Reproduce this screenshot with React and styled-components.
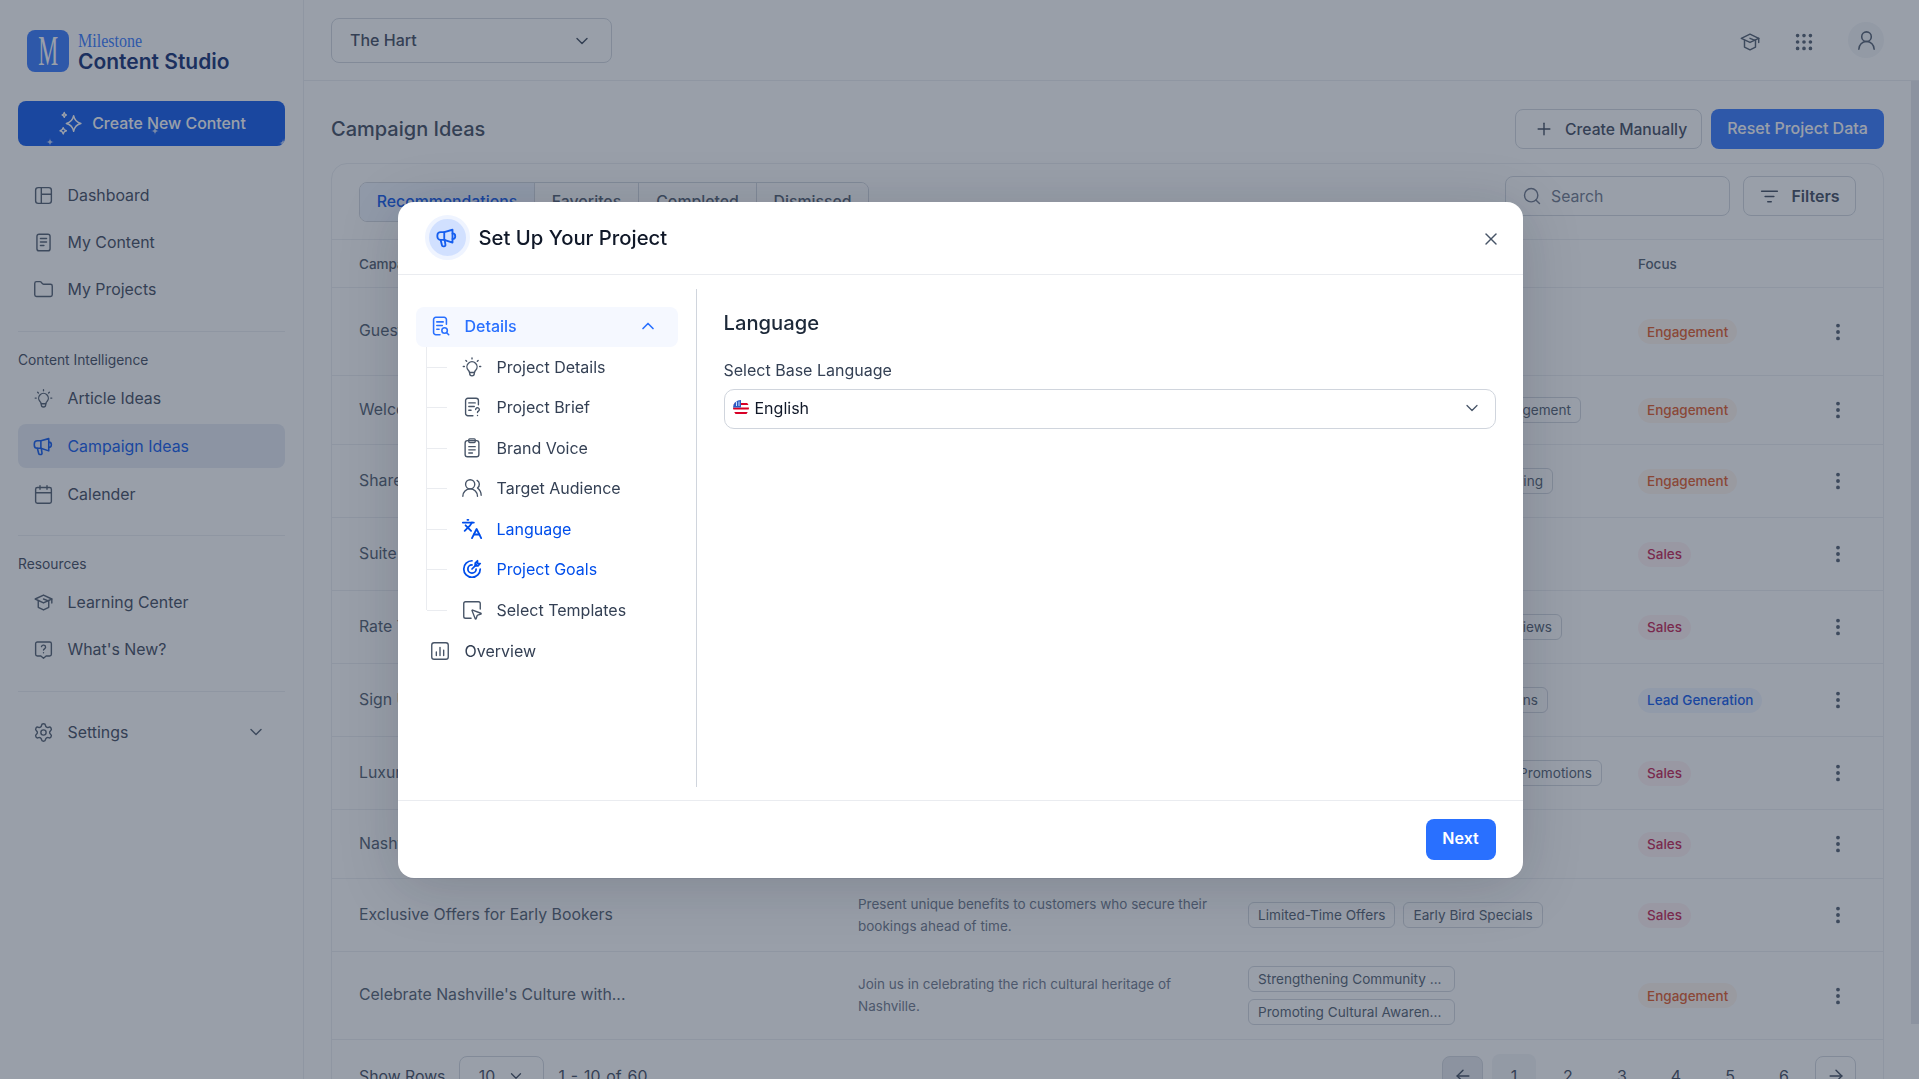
import React from "react";
import styled, { createGlobalStyle } from "styled-components";
import { ChevronDown, ChevronUp, X, Plus, Search, EllipsisVertical, Grip, UserRound, Languages, UsersRound, SquareMousePointer, Settings, Folder, Calendar, ArrowLeft, ArrowRight } from "lucide-react";

const Global = createGlobalStyle`
  html, body { margin: 0; padding: 0; height: 100%; overflow: hidden; background: #fff; }
  body { font-family: Inter, "Noto Sans", sans-serif; color: #344054; }
  #root { height: 100%; }
  * { box-sizing: border-box; }
`;

const Page = styled.div`display: flex; height: 1079px; width: 100%; position: relative; overflow: hidden;`;

const Sidebar = styled.aside`
  width: 304px; flex: none; height: 100%; border-right: 1px solid #EAECF0; padding: 30px 18px 0; display: flex; flex-direction: column;
`;
const Brand = styled.div`display: flex; gap: 9px; height: 41px; padding-left: 9px; align-items: center;`;
const LogoMark = styled.div`
  width: 42px; height: 42px; border-radius: 8px; background: #2970FF; color: #fff; display: flex; align-items: center; justify-content: center;
  font-family: "Liberation Serif", serif; font-size: 43px; line-height: 42px; overflow: hidden;
  span { display: block; transform: scaleX(.52); }
`;
const BrandText = styled.div`display: flex; flex-direction: column; line-height: 1; padding-top: 5px;`;
const Milestone = styled.span`
  font-family: "Liberation Serif", serif; font-size: 18px; color: #2970FF; transform: scaleX(.89); transform-origin: left; line-height: 17px; height: 17px; white-space: nowrap;
`;
const Studio = styled.span`font-size: 21px; font-weight: 600; color: #03206b; line-height: 24px; white-space: nowrap;`;
const CreateBtn = styled.button`
  margin-top: 30px; height: 45px; width: 267px; border: 0; border-radius: 8px; background: #004EEB; color: #fff; font: 500 15.9px Inter, sans-serif;
  display: flex; align-items: center; justify-content: center; gap: 9px; position: relative; overflow: hidden; padding: 0 0 1px 1px;
`;
const Speck = styled.svg`position: absolute; left: ${p => p.$x}px; top: ${p => p.$y}px; width: 8px; height: 8px; fill: #fff; opacity: .75;`;
const NavGroup = styled.nav`display: flex; flex-direction: column; gap: ${p => p.$gap || 3}px; margin-top: ${p => p.$mt || 0}px;`;
const NavItem = styled.a`
  height: 44px; border-radius: 8px; display: flex; align-items: center; gap: 13.5px; padding: 0 15px; font-size: 15.9px; font-weight: 400;
  color: ${p => p.$active ? "#004EEB" : "#344054"}; background: ${p => p.$active ? "#E4E9F2" : "transparent"};
  > svg { flex: none; width: 21px; height: 21px; color: ${p => p.$active ? "#004EEB" : "#475467"}; }
`;
const NavEnd = styled.span`margin-left: auto; display: flex; margin-right: 4px; color: #475467;`;
const Rule = styled.hr`border: 0; height: 1px; background: #EAECF0; margin: ${p => p.$mt || 20}px 0 0; width: 267px;`;
const SectionLabel = styled.div`font-size: 13.8px; color: #344054; line-height: 18px; margin-top: 19px;`;

const Main = styled.div`flex: 1; min-width: 0; display: flex; flex-direction: column; height: 100%;`;
const Topbar = styled.header`
  height: 81px; flex: none; border-bottom: 1px solid #EAECF0; padding: 18px 35px 0 27px; display: flex; justify-content: space-between;
`;
const ProjectSelect = styled.div`
  width: 281px; height: 45px; border: 1px solid #D0D5DD; border-radius: 8px; display: flex; align-items: center; justify-content: space-between; padding: 0 19px 2px 18px;
  font-size: 16px; font-weight: 500; color: #344054;
  svg { margin-top: 2px; }
`;
const TopIcons = styled.div`
  display: flex; align-items: center; gap: 27px; height: 44px; color: #475467;
  > svg { margin-top: 4px; }
  > svg:first-child { margin-right: 5px; width: 22px; height: 22px; }
`;
const Avatar = styled.div`width: 36px; height: 36px; border-radius: 50%; background: #F2F4F7; display: flex; align-items: center; justify-content: center; margin-left: 6px;`;
const Below = styled.div`flex: 1; min-height: 0; display: flex;`;
const Scroll = styled.div`flex: 1; min-width: 0; overflow: hidden; padding: 28px 27px 25px;`;
const Rail = styled.div`width: 8px; flex: none;`;
const Thumb = styled.div`height: 943px; background: #E4E7EC;`;
const TitleRow = styled.div`display: flex; align-items: center; justify-content: space-between; height: 40px;`;
const PageTitle = styled.h1`margin: 0; font-size: 20px; font-weight: 500; color: #344054;`;
const Actions = styled.div`display: flex; gap: 9px;`;
const GhostBtn = styled.button`
  height: 40px; border: 1px solid #D0D5DD; border-radius: 8px; background: #fff; color: #344054; font: 500 15.7px Inter, sans-serif; padding: 0 12px 0 18px;
  display: flex; align-items: center; gap: 11px; width: ${p => p.$w}px; white-space: nowrap;
`;
const PrimaryBtn = styled.button`
  height: 40px; border: 0; border-radius: 8px; background: #2970FF; color: #fff; font: 500 16px Inter, sans-serif; width: 173px; white-space: nowrap; padding: 0 0 2px;
`;
const Card = styled.section`border: 1px solid #EAECF0; border-radius: 16px; margin-top: 14px;`;
const Toolbar = styled.div`height: 76px; display: flex; align-items: center; justify-content: space-between; padding: 0 27px; border-bottom: 1px solid #EAECF0;`;
const Tabs = styled.div`display: flex; height: 40px; border: 1px solid #D0D5DD; border-radius: 8px; overflow: hidden;`;
const Tab = styled.div`
  width: ${p => p.$w}px; display: flex; align-items: center; justify-content: center; font-size: 15.8px; font-weight: 500;
  color: ${p => p.$active ? "#004EEB" : "#475467"}; background: ${p => p.$active ? "#EFF4FF" : "#fff"};
  & + & { border-left: 1px solid #D0D5DD; }
`;
const ToolRight = styled.div`display: flex; gap: 13px; margin-top: -11px;`;
const SearchBox = styled.div`
  width: 225px; height: 40px; border: 1px solid #D0D5DD; border-radius: 8px; display: flex; align-items: center; gap: 9px; padding: 0 16px; color: #667085; font-size: 15.8px;
`;
const FilterBtn = styled.div`
  width: 113px; height: 40px; border: 1px solid #D0D5DD; border-radius: 8px; display: flex; align-items: center; justify-content: center; gap: 11px; color: #344054; font-size: 16px; font-weight: 600;
`;
const Row = styled.div`
  display: grid; grid-template-columns: 499px 390px 390px 1fr 40px; align-items: center; padding: 0 25px 0 27px; min-height: ${p => p.$h}px; border-bottom: 1px solid #EAECF0;
`;
const HeadCell = styled.div`font-size: 13.5px; font-weight: 500; color: #475467;`;
const NameCell = styled.div`font-size: 15.85px; color: #475467; white-space: nowrap; margin-bottom: 2px;`;
const DescCell = styled.div`font-size: 13.5px; line-height: 22px; color: #667085; max-width: 372px; margin-bottom: 1px;`;
const TagCell = styled.div`display: flex; flex-wrap: wrap; gap: 7px 8px;`;
const Tag = styled.span`
  height: 26px; border: 1px solid #D0D5DD; border-radius: 6px; display: inline-flex; align-items: center; padding: 0 9px; font-size: 13.6px; color: #475467; white-space: nowrap;
  width: ${p => p.$w ? p.$w + "px" : "auto"}; justify-content: ${p => p.$end ? "flex-end" : "flex-start"};
`;
const pill = { Engagement: ["#FFF4ED", "#E04F16"], Sales: ["#FFF1F3", "#C01048"], "Lead Generation": ["#EFF4FF", "#004EEB"] };
const Focus = styled.span`
  display: inline-flex; height: 25px; align-items: center; padding: 0 9px; border-radius: 13px; font-size: 13.5px; font-weight: 500;
  background: ${p => pill[p.$k][0]}; color: ${p => pill[p.$k][1]};
`;
const Kebab = styled.div`display: flex; justify-content: center; color: #475467;`;
const Foot = styled.div`height: 74px; padding: 14px 27px 0; display: flex; justify-content: space-between; align-items: flex-start;`;
const FootLeft = styled.div`display: flex; align-items: center; gap: 14px; font-size: 15.8px; color: #344054; margin-top: 2px;`;
const RowsSelect = styled.div`width: 85px; height: 40px; border: 1px solid #D0D5DD; border-radius: 8px; display: flex; align-items: center; justify-content: center; gap: 12px;`;
const RangeText = styled.span`word-spacing: 1.5px;`;
const Pager = styled.div`display: flex; align-items: center; padding-left: 2px;`;
const ArrowBtn = styled.div`
  width: 41px; height: 40px; border: 1px solid #D0D5DD; border-radius: 8px; background: ${p => p.$off ? "#E4E7EC" : "#fff"}; display: flex; align-items: center; justify-content: center; color: #344054;
`;
const PageNum = styled.div`
  width: 44px; height: 44px; margin: 0 ${p => p.$last ? 9 : 5}px 0 ${p => p.$first ? 9 : 5}px; border-radius: 8px; background: ${p => p.$on ? "#F2F4F7" : "transparent"}; display: flex; align-items: center; justify-content: center; font-size: 16px; color: #344054;
`;

const Overlay = styled.div`
  position: fixed; inset: 0; padding-left: 1px; background: rgba(52, 64, 84, .5); display: flex; align-items: center; justify-content: center; z-index: 10;
`;
const Modal = styled.div`
  width: 1125px; height: 676px; background: #fff; border-radius: 16px; display: flex; flex-direction: column; box-shadow: 0 8px 60px rgba(16, 24, 40, .18);
`;
const ModalHead = styled.div`height: 73px; flex: none; border-bottom: 1px solid #EAECF0; display: flex; align-items: center; padding: 0 22px 0 27px; gap: 9px;`;
const Ring = styled.div`
  width: 45px; height: 45px; border-radius: 50%; background: #D1E0FF; border: 4px solid #EFF4FF; display: flex; align-items: center; justify-content: center; color: #155EEF;
`;
const ModalTitle = styled.h2`margin: 0; flex: 1; font-size: 20.3px; font-weight: 500; color: #101828;`;
const CloseBtn = styled.div`display: flex; color: #475467; margin-top: 2px;`;
const ModalBody = styled.div`flex: 1; min-height: 0; display: flex; padding: 14px 0 13px;`;
const Steps = styled.div`
  width: 299px; flex: none; border-right: 1px solid #D0D5DD; padding: 18px 18px 0; display: flex; flex-direction: column;
`;
const StepHead = styled.div`
  height: 40px; border-radius: 8px; display: flex; align-items: center; gap: 14px; padding: 0 13px 1px; font-size: 16px; font-weight: ${p => p.$open ? 500 : 400};
  background: ${p => p.$open ? "#F5F8FF" : "transparent"}; color: ${p => p.$open ? "#2970FF" : "#344054"};
  > svg { flex: none; color: ${p => p.$open ? "#2970FF" : "#475467"}; }
`;
const StepChev = styled.span`margin-left: auto; display: flex; margin-right: 7px;`;
const Tree = styled.div`margin-left: 10px; border-left: 1px solid #EAECF0; display: flex; flex-direction: column; height: 263px; margin-bottom: 22px;`;
const TreeItem = styled.div`
  height: 40.5px; flex: none; display: flex; align-items: center; padding-left: 34px; gap: 14px; font-size: 16px; position: relative;
  color: ${p => p.$on ? "#004EEB" : "#344054"};
  svg { flex: none; color: ${p => p.$on ? "#004EEB" : "#475467"}; }
  &::before { content: ""; position: absolute; left: 0; top: 50%; width: 20px; height: 1px; background: #EAECF0; }
`;
const Pane = styled.div`flex: 1; padding: 22px 27px 0; display: flex; flex-direction: column;`;
const PaneTitle = styled.h3`margin: 0; font-size: 20.2px; font-weight: 500; line-height: 24px; color: #1D2939;`;
const FieldLabel = styled.label`font-size: 16px; color: #344054; line-height: 20px; margin-top: 25px;`;
const LangSelect = styled.div`
  height: 40px; margin-top: 9px; border: 1px solid #D0D5DD; border-radius: 10px; display: flex; align-items: center; padding: 0 13px 1px 8px; gap: 6px; font-size: 16px; color: #101828;
  svg:last-child { margin-left: auto; color: #475467; }
`;
const ModalFoot = styled.div`height: 78px; flex: none; border-top: 1px solid #EAECF0; display: flex; justify-content: flex-end; align-items: flex-start; padding: 18px 27px 0;`;
const NextBtn = styled.button`width: 70px; height: 41px; border: 0; border-radius: 8px; background: #2970FF; color: #fff; font: 600 16px Inter, sans-serif; padding: 0 0 2px;`;

const Ic = ({ s = 20, w = 1.6, children }) => (
  <svg width={s} height={s} viewBox="0 0 24 24" fill="none" stroke="currentColor" strokeWidth={w} strokeLinecap="round" strokeLinejoin="round">{children}</svg>
);
const star = (cx, cy, r) => `M${cx} ${cy - r}Q${cx} ${cy} ${cx + r} ${cy}Q${cx} ${cy} ${cx} ${cy + r}Q${cx} ${cy} ${cx - r} ${cy}Q${cx} ${cy} ${cx} ${cy - r}Z`;
const Sparkle = () => <Ic s={25} w={1.4}><path d="M15 4.5c.8 4 2.4 6.4 7 7.5-4.6 1.1-6.2 3.5-7 7.5-.8-4-2.4-6.4-7-7.5 4.6-1.1 6.2-3.5 7-7.5z" /><path d="M6 1.5c.3 1.4.8 2 2 2.3-1.2.3-1.7.9-2 2.3-.3-1.4-.8-2-2-2.3 1.2-.3 1.7-.9 2-2.3z" /><path d="M5 16c.4 1.8 1 2.6 3 3-2 .4-2.6 1.2-3 3-.4-1.8-1-2.6-3-3 2-.4 2.6-1.2 3-3z" /></Ic>;
const Dash = () => <Ic><rect x="3" y="3" width="18" height="18" rx="3" /><path d="M9.5 3v18M9.5 10.5H21" /></Ic>;
const Doc = () => <Ic><rect x="4.5" y="2.5" width="15" height="19" rx="2.5" /><path d="M8.5 7.5h7M8.5 11.5h7M8.5 15.5h4" /></Ic>;
const Bulb = ({ s = 22 }) => <Ic s={s} w={1.5}><path d="M8 15.5a5.5 5.5 0 1 1 8 0c-.8.8-1.2 1.5-1.2 2.5H9.2c0-1-.4-1.7-1.2-2.5z" /><path d="M9.5 18v1.2a2.5 2.5 0 0 0 5 0V18" /><path d="M12 2v1.2M2.5 11.5h1.2M20.3 11.5h1.2M5.3 4.8l.9.9M18.7 4.8l-.9.9" /></Ic>;
const Mega = ({ s = 22, w = 1.8 }) => <Ic s={s} w={w}><path d="M18 3 9 5.500H5A3.500 3.500 0 0 0 1.500 9v1.500A3.500 3.500 0 0 0 5 14h4l9 3z" /><path d="M9 5.500V14" /><path d="m5 14 1.500 6a1.500 1.500 0 0 0 1.500 1.200h.8a1.500 1.500 0 0 0 1.500-1.700L9.500 14.200" /><path d="M18 7a3 3 0 0 1 0 6" /></Ic>;
const Cap = ({ s = 21 }) => <Ic s={s} w={1.6}><path d="M2.5 8 12 3.5 21.5 8 12 12.5z" /><path d="M6 10v7.5l6 3 6-3V10" /><path d="M21.5 8v4.5" /><path d="m12 8 5.5 2.2" /></Ic>;
const Ask = () => <Ic><path d="M5 3.5h14a2 2 0 0 1 2 2v12a2 2 0 0 1-2 2h-4l-3 2.5L9 19.500H5a2 2 0 0 1-2-2v-12a2 2 0 0 1 2-2z" /><path d="M9.7 8.700a2.400 2.400 0 0 1 4.700.7c0 1.600-2.400 2-2.400 3.300M12 15.700h.01" /></Ic>;
const DocSearch = () => <Ic s={22} w={1.7}><path d="M19 10V5a2.500 2.500 0 0 0-2.500-2.500h-9A2.500 2.500 0 0 0 5 5v14a2.500 2.500 0 0 0 2.500 2.500H12" /><path d="M8.500 7.500h7M8.500 11.500h6M8.500 15.500h2.500" /><circle cx="17" cy="17" r="3" /><path d="m19.300 19.300 2.200 2.200" /></Ic>;
const DocAsk = () => <Ic s={22} w={1.5}><path d="M19 9.500V5a2.500 2.500 0 0 0-2.500-2.500h-9A2.500 2.500 0 0 0 5 5v14a2.500 2.500 0 0 0 2.500 2.500H13" /><path d="M8.500 7.500h7M8.500 11.500h6M8.500 15.500h2.500" /><path d="M16 14.700a2 2 0 1 1 3 1.800c-.7.400-1 .8-1 1.500M18 21.300h.01" /></Ic>;
const Clip = () => <Ic s={22} w={1.5}><rect x="4.500" y="4" width="15" height="17.500" rx="2.500" /><rect x="8.500" y="2" width="7" height="4" rx="1" /><path d="M8.500 10.500h7M8.500 14h7M8.500 17.500h4" /></Ic>;
const Goal = () => <Ic s={22} w={1.9}><path d="M12 3a9 9 0 1 0 9 9" /><path d="M12 7.500a4.500 4.500 0 1 0 4.500 4.500" /><path d="m12 12 5-5" /><path d="M15.500 5.500 18 3v3h3l-2.500 2.500h-3z" /></Ic>;
const Chart = () => <Ic s={22} w={1.5}><rect x="3" y="3" width="18" height="18" rx="2.500" /><path d="M8 17v-4M12 17V8M16 17v-6" /></Ic>;
const Filter = () => <Ic s={21} w={1.7}><path d="M3 6h18M7 12h10M10 18h4" /></Ic>;
const Flag = () => (
  <svg width="16" height="16" viewBox="0 0 16 16">
    <defs><clipPath id="fc"><circle cx="8" cy="8" r="8" /></clipPath></defs>
    <g clipPath="url(#fc)">
      <rect width="16" height="16" fill="#fff" />
      <path d="M0 3h16v2H0zM0 7.500h16v2H0zM0 12h16v2H0z" fill="#D80027" />
      <path d="M0 0h8v7.500H0z" fill="#2A5CC4" />
      <path d="M3 1.500h1V6H3zM5.500 1.500h1V6h-1z" fill="#cfe0ff" />
    </g>
  </svg>
);

const rows = [
  { h: 88, n: "Guest Loyalty Rewards Program", d: "Reward returning guests with special perks and stay credits.", t: [], f: "Engagement" },
  { h: 69, n: "Welcome Back Returning Guests", d: "Personal touches for guests who come back to stay again.", t: [["Loyalty Perks", 120], ["Guest Engagement", 205, 1]], f: "Engagement" },
  { h: 73, n: "Share Your Stay Stories", d: "Invite guests to share their favorite moments online.", t: [["Social Media Sharing", 305, 1]], f: "Engagement" },
  { h: 73, n: "Suite Upgrades for Members", d: "Offer complimentary suite upgrades to loyal members.", t: [["Room Upgrades", 0]], f: "Sales" },
  { h: 73, n: "Rate Your Experience Today", d: "Ask guests to leave feedback about their recent stay.", t: [["Post-Stay Online Guest Reviews", 314, 1]], f: "Sales" },
  { h: 73, n: "Sign Up and Save More", d: "Encourage visitors to join the list for early offers.", t: [["Exclusive Newsletter Subscriptions", 300, 1]], f: "Lead Generation" },
  { h: 73, n: "Luxury Weekend Getaways", d: "Promote relaxing weekend escapes in the heart of the city.", t: [["Luxury Seasonal Weekend Promotions", 354, 1]], f: "Sales" },
  { h: 69, n: "Nashville Music Packages", d: "Bundle live music tickets with overnight stays.", t: [["Music Packages", 0]], f: "Sales" },
  { h: 73, n: "Exclusive Offers for Early Bookers", d: "Present unique benefits to customers who secure their bookings ahead of time.", t: [["Limited-Time Offers", 0], ["Early Bird Specials", 0]], f: "Sales" },
  { h: 88, n: "Celebrate Nashville's Culture with...", d: "Join us in celebrating the rich cultural heritage of Nashville.", t: [["Strengthening Community ...", 207], ["Promoting Cultural Awaren...", 207]], f: "Engagement" },
];
const nav1 = [["Dashboard", <Dash />], ["My Content", <Doc />], ["My Projects", <Folder size={21} strokeWidth={1.6} />]];
const tree = [
  ["Project Details", <Bulb />], ["Project Brief", <DocAsk />], ["Brand Voice", <Clip />], ["Target Audience", <UsersRound size={22} strokeWidth={1.5} />],
  ["Language", <Languages size={22} strokeWidth={2} />, 1], ["Project Goals", <Goal />, 1], ["Select Templates", <SquareMousePointer size={22} strokeWidth={1.5} />],
];

export default function App() {
  return (
    <>
      <Global />
      <Page>
        <Sidebar>
          <Brand>
            <LogoMark><span>M</span></LogoMark>
            <BrandText><Milestone>Milestone</Milestone><Studio>Content Studio</Studio></BrandText>
          </Brand>
          <CreateBtn>
            <Sparkle />Create New Content
            <Speck $x={28} $y={37} viewBox="0 0 16 16"><path d={star(8, 8, 8)} /></Speck>
            <Speck $x={133} $y={26} viewBox="0 0 16 16"><path d={star(8, 8, 8)} /></Speck>
            <Speck $x={261} $y={38} viewBox="0 0 16 16"><path d={star(8, 8, 8)} /></Speck>
          </CreateBtn>
          <NavGroup $mt={27}>
            {nav1.map(([t, i]) => <NavItem key={t}>{i}{t}</NavItem>)}
          </NavGroup>
          <Rule />
          <SectionLabel>Content Intelligence</SectionLabel>
          <NavGroup $mt={7} $gap={4}>
            <NavItem><Bulb />Article Ideas</NavItem>
            <NavItem $active><Mega />Campaign Ideas</NavItem>
            <NavItem><Calendar size={21} strokeWidth={1.6} />Calender</NavItem>
          </NavGroup>
          <Rule $mt={19} />
          <SectionLabel>Resources</SectionLabel>
          <NavGroup $mt={7}>
            <NavItem><Cap />Learning Center</NavItem>
            <NavItem><Ask />What's New?</NavItem>
          </NavGroup>
          <Rule />
          <NavGroup $mt={18}>
            <NavItem><Settings size={21} strokeWidth={1.6} />Settings<NavEnd><ChevronDown size={20} strokeWidth={1.7} /></NavEnd></NavItem>
          </NavGroup>
        </Sidebar>
        <Main>
          <Topbar>
            <ProjectSelect>The Hart<ChevronDown size={20} strokeWidth={1.7} /></ProjectSelect>
            <TopIcons><Cap /><Grip size={22} strokeWidth={2} /><Avatar><UserRound size={23} strokeWidth={1.6} /></Avatar></TopIcons>
          </Topbar>
          <Below>
            <Scroll>
              <TitleRow>
                <PageTitle>Campaign Ideas</PageTitle>
                <Actions>
                  <GhostBtn $w={187}><Plus size={20} strokeWidth={1.7} />Create Manually</GhostBtn>
                  <PrimaryBtn>Reset Project Data</PrimaryBtn>
                </Actions>
              </TitleRow>
              <Card>
                <Toolbar>
                  <Tabs>
                    <Tab $w={174} $active>Recommendations</Tab>
                    <Tab $w={104}>Favorites</Tab>
                    <Tab $w={118}>Completed</Tab>
                    <Tab $w={112}>Dismissed</Tab>
                  </Tabs>
                  <ToolRight>
                    <SearchBox><Search size={20} strokeWidth={1.7} />Search</SearchBox>
                    <FilterBtn><Filter />Filters</FilterBtn>
                  </ToolRight>
                </Toolbar>
                <Row $h={48}>
                  <HeadCell>Campaign Name</HeadCell><HeadCell>Description</HeadCell><HeadCell>Tags</HeadCell><HeadCell>Focus</HeadCell><div />
                </Row>
                {rows.map(r => (
                  <Row key={r.n} $h={r.h}>
                    <NameCell>{r.n}</NameCell>
                    <DescCell>{r.d}</DescCell>
                    <TagCell>{r.t.map(([t, w, e]) => <Tag key={t} $w={w} $end={e}>{t}</Tag>)}</TagCell>
                    <div><Focus $k={r.f}>{r.f}</Focus></div>
                    <Kebab><EllipsisVertical size={22} strokeWidth={2.2} /></Kebab>
                  </Row>
                ))}
                <Foot>
                  <FootLeft>Show Rows<RowsSelect>10<ChevronDown size={18} strokeWidth={1.7} /></RowsSelect><RangeText>1 - 10 of 60</RangeText></FootLeft>
                  <Pager>
                    <ArrowBtn $off><ArrowLeft size={20} strokeWidth={1.7} /></ArrowBtn>
                    {[1, 2, 3, 4, 5, 6].map(n => <PageNum key={n} $on={n === 1} $first={n === 1} $last={n === 6}>{n}</PageNum>)}
                    <ArrowBtn><ArrowRight size={20} strokeWidth={1.7} /></ArrowBtn>
                  </Pager>
                </Foot>
              </Card>
            </Scroll>
            <Rail><Thumb /></Rail>
          </Below>
        </Main>
        <Overlay>
          <Modal>
            <ModalHead>
              <Ring><Mega s={22} w={2} /></Ring>
              <ModalTitle>Set Up Your Project</ModalTitle>
              <CloseBtn><X size={20} strokeWidth={1.7} /></CloseBtn>
            </ModalHead>
            <ModalBody>
              <Steps>
                <StepHead $open><DocSearch />Details<StepChev><ChevronUp size={20} strokeWidth={2} /></StepChev></StepHead>
                <Tree>
                  {tree.map(([t, i, on]) => <TreeItem key={t} $on={on}>{i}{t}</TreeItem>)}
                </Tree>
                <StepHead><Chart />Overview</StepHead>
              </Steps>
              <Pane>
                <PaneTitle>Language</PaneTitle>
                <FieldLabel>Select Base Language</FieldLabel>
                <LangSelect><Flag />English<ChevronDown size={20} strokeWidth={1.5} /></LangSelect>
              </Pane>
            </ModalBody>
            <ModalFoot><NextBtn>Next</NextBtn></ModalFoot>
          </Modal>
        </Overlay>
      </Page>
    </>
  );
}
